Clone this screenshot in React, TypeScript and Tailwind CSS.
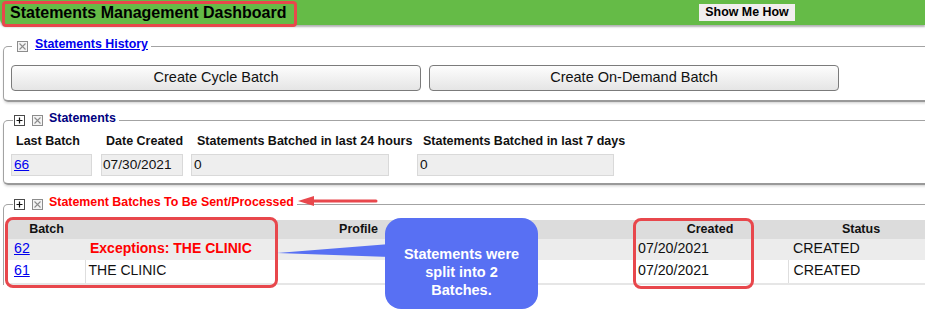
import React from "react";

function XBox() {
  return (
    <svg width="11" height="11" viewBox="0 0 11 11" className="shrink-0 block">
      <rect x="0.5" y="0.5" width="10" height="10" fill="#f4f4f4" stroke="#8c8c8c" />
      <path d="M2.5 2.5L8.5 8.5M8.5 2.5L2.5 8.5" stroke="#8c8c8c" strokeWidth="1.1" />
    </svg>
  );
}

function PlusBox() {
  return (
    <svg width="11" height="11" viewBox="0 0 11 11" className="shrink-0 block">
      <rect x="0.5" y="0.5" width="10" height="10" fill="#ffffff" stroke="#4a4a4a" />
      <path d="M5.5 2.5V8.5M2.5 5.5H8.5" stroke="#111" strokeWidth="1.2" />
    </svg>
  );
}

export default function App() {
  return (
    <div className="relative w-[925px] h-[311px] overflow-hidden bg-white font-['Liberation_Sans',Arial,sans-serif] text-[#111]">
      {/* top bar */}
      <div className="relative z-10 flex items-center h-[25px] bg-[#65bb47] rounded-bl-[6px] shadow-[0_2px_2px_rgba(0,0,0,0.3)]">
        <div className="pl-[10px] text-[16px] font-bold leading-[25px] text-black">Statements Management Dashboard</div>
        <button type="button" className="ml-auto mr-[130px] h-[17px] w-[96px] bg-[#f1eeee] text-[12.4px] font-bold leading-[17px] text-black">
          Show Me How
        </button>
      </div>

      {/* history */}
      <fieldset className="ml-[3px] mt-[13px] w-[950px] p-0 border border-b-2 border-[#a3a3a3] border-b-[#999] rounded-[5px] shadow-[0_2px_3px_-1px_rgba(0,0,0,0.2)]">
        <legend className="ml-[8px] pl-[5px] pr-[3px] h-[16px] flex items-start">
          <span className="mt-[3px] mr-[7px]">
            <XBox />
          </span>
          <a href="#" className="leading-[12px] text-[12.4px] font-bold text-[#0000ee] underline">
            Statements History
          </a>
        </legend>
        <div className="flex gap-[8px] pl-[7px] mt-[11px] pb-[9px]">
          <button type="button" className="w-[410px] h-[26px] rounded-[4px] border border-[#7b7b7b] bg-linear-to-b from-[#fdfdfd] to-[#e5e5e5] text-[14.5px] text-[#111]">
            Create Cycle Batch
          </button>
          <button type="button" className="w-[410px] h-[26px] rounded-[4px] border border-[#7b7b7b] bg-linear-to-b from-[#fdfdfd] to-[#e5e5e5] text-[14.5px] text-[#111]">
            Create On-Demand Batch
          </button>
        </div>
      </fieldset>

      {/* statements */}
      <fieldset className="ml-[3px] mt-[10px] w-[950px] p-0 border border-b-2 border-[#a3a3a3] border-b-[#999] rounded-[5px] shadow-[0_2px_3px_-1px_rgba(0,0,0,0.2)]">
        <legend className="ml-[9px] pl-[1px] pr-[3px] h-[16px] flex items-start">
          <span className="mt-[3px] mr-[7px]">
            <PlusBox />
          </span>
          <span className="mt-[3px] mr-[6px]">
            <XBox />
          </span>
          <span className="leading-[12px] text-[12.4px] font-bold text-[#000080]">Statements</span>
        </legend>
        <div className="flex pl-[7px] mt-[5px] pb-[7px] text-[12.5px]">
          <div className="w-[90px]">
            <div className="pl-[5px] h-[16px] leading-[16px] font-bold whitespace-nowrap">Last Batch</div>
            <div className="mt-[5px] w-[81px] h-[22px] bg-[#eeeeee] border border-[#d9d9d9] pl-[2px] flex items-center text-[13.7px]">
              <a href="#" className="text-[#0000ee] underline">66</a>
            </div>
          </div>
          <div className="w-[90px]">
            <div className="pl-[5px] h-[16px] leading-[16px] font-bold whitespace-nowrap">Date Created</div>
            <div className="mt-[5px] w-[82px] h-[22px] bg-[#eeeeee] border border-[#d9d9d9] pl-[1px] flex items-center text-[13.7px]">07/30/2021</div>
          </div>
          <div className="w-[226px]">
            <div className="pl-[6px] h-[16px] leading-[16px] font-bold whitespace-nowrap">Statements Batched in last 24 hours</div>
            <div className="mt-[5px] w-[198px] h-[22px] bg-[#eeeeee] border border-[#d9d9d9] pl-[2px] flex items-center text-[13.7px]">0</div>
          </div>
          <div className="w-[200px]">
            <div className="pl-[6px] h-[16px] leading-[16px] font-bold whitespace-nowrap">Statements Batched in last 7 days</div>
            <div className="mt-[5px] w-[197px] h-[22px] bg-[#eeeeee] border border-[#d9d9d9] pl-[2px] flex items-center text-[13.7px]">0</div>
          </div>
        </div>
      </fieldset>

      {/* batches */}
      <fieldset className="ml-[3px] mt-[11px] w-[950px] p-0 border border-b-0 border-[#a3a3a3] rounded-tl-[5px] rounded-tr-[5px]">
        <legend className="ml-[9px] pl-[1px] pr-[3px] h-[16px] flex items-start">
          <span className="mt-[3px] mr-[7px]">
            <PlusBox />
          </span>
          <span className="mt-[3px] mr-[6px]">
            <XBox />
          </span>
          <span className="leading-[12px] text-[12.4px] font-bold text-[#ff0000]">Statement Batches To Be Sent/Processed</span>
        </legend>
        <div className="ml-[4px] mt-[8px] w-[926px] border-b-2 border-[#e6e6e6]">
          <table className="w-[926px] table-fixed border-collapse">
            <colgroup>
              <col className="w-[77px]" />
              <col className="w-[547px]" />
              <col className="w-[156px]" />
              <col className="w-[146px]" />
            </colgroup>
            <thead>
              <tr className="h-[19px] bg-[#dcdcdc] text-[12.5px] font-bold">
                <th className="p-0 leading-[19px] text-center">Batch</th>
                <th className="p-0 leading-[19px] text-center">Profile</th>
                <th className="p-0 leading-[19px] text-center">Created</th>
                <th className="p-0 leading-[19px] text-center">Status</th>
              </tr>
            </thead>
            <tbody className="text-[14.2px]">
              <tr className="h-[21px] bg-[#ececec]">
                <td className="p-0 pt-[1px] pl-[6px] align-top leading-[16px]">
                  <a href="#" className="text-[#0000ee] underline">62</a>
                </td>
                <td className="p-0 pt-[1px] pl-[5px] align-top leading-[16px] font-bold text-[14px] text-[#ff0000]">Exceptions: THE CLINIC</td>
                <td className="p-0 pt-[1px] pl-[6px] align-top leading-[16px]">07/20/2021</td>
                <td className="p-0 pt-[1px] pl-[5px] align-top leading-[16px]">CREATED</td>
              </tr>
              <tr className="h-[23px] bg-white">
                <td className="p-0 pt-[2px] pl-[6px] align-top leading-[16px]">
                  <a href="#" className="text-[#0000ee] underline">61</a>
                </td>
                <td className="p-0 pt-[2px] pl-[3px] align-top leading-[16px] border-l border-[#dedede] text-[14px]">THE CLINIC</td>
                <td className="p-0 pt-[2px] pl-[6px] align-top leading-[16px]">07/20/2021</td>
                <td className="p-0 pt-[2px] pl-[5px] align-top leading-[16px] border-l border-[#dedede]">CREATED</td>
              </tr>
            </tbody>
          </table>
        </div>
      </fieldset>

      {/* annotations */}
      <div className="absolute left-[2px] top-[1px] w-[295px] h-[26px] rounded-[4px] border-[3px] border-[#e8474c] z-20" />
      <svg className="absolute left-[296px] top-[194px]" width="84" height="14" viewBox="0 0 84 14">
        <path d="M16 7H80" stroke="#e8474c" strokeWidth="3" strokeLinecap="round" />
        <polygon points="2,7 18,2 18,12" fill="#e8474c" />
      </svg>
      <div className="absolute left-[5px] top-[217px] w-[273px] h-[71px] rounded-[8px] border-[3px] border-[#e8474c]" />
      <div className="absolute left-[633px] top-[218px] w-[121px] h-[71px] rounded-[8px] border-[3px] border-[#e8474c]" />
      <svg className="absolute left-[275px] top-[240px]" width="116" height="20" viewBox="0 0 116 20">
        <polygon points="2,13 115,4 115,17" fill="#5870f3" />
      </svg>
      <div className="absolute left-[385px] top-[218px] w-[153px] h-[91px] rounded-[16px] bg-[#5870f3] pt-[27px] text-center text-white font-bold text-[14.5px] leading-[18px]">
        Statements were
        <br />
        split into 2
        <br />
        Batches.
      </div>
    </div>
  );
}
